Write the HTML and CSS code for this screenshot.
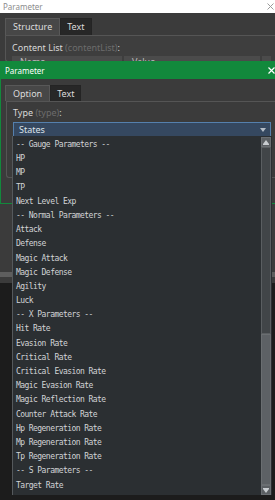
FILE: index.html
```html
<!DOCTYPE html>
<html lang="en">
<head>
  <meta charset="UTF-8">
  <meta name="viewport" content="width=device-width, initial-scale=1.0">
  <title>Parameter</title>
  <link rel="stylesheet" href="styles.css">
</head>
<body>

  <div class="desktop">

    <!-- window behind -->
    <div class="win win-back">
      <div class="titlebar light">
        <span>Parameter</span>
        <svg class="close" width="7" height="7" viewBox="0 0 7 7"><path d="M0.5 0.5L6.5 6.5M6.5 0.5L0.5 6.5" stroke="#9a9a9a" stroke-width="1"/></svg>
      </div>
      <div class="tabs">
        <div class="tab active">Structure</div>
        <div class="tab">Text</div>
      </div>
      <div class="pane back-pane">
        <div class="field-label">Content List <span class="dim">(contentList)</span>:</div>
        <div class="table-head">
          <div class="th th-name">Name</div>
          <div class="th th-value">Value</div>
          <div class="th th-sort">&#9650;</div>
        </div>
      </div>
      <div class="back-footer"></div>
    </div>

    <!-- window in front -->
    <div class="win win-front">
      <div class="titlebar green">
        <span>Parameter</span>
        <svg class="close" width="7" height="7" viewBox="0 0 7 7"><path d="M0.5 0.5L6.5 6.5M6.5 0.5L0.5 6.5" stroke="#fff" stroke-width="1.2"/></svg>
      </div>
      <div class="tabs">
        <div class="tab active">Option</div>
        <div class="tab">Text</div>
      </div>
      <div class="pane front-pane">
        <div class="field-label">Type <span class="dim">(type)</span>:</div>
        <div class="select">
          <span>States</span>
          <svg class="select-arrow" width="6" height="4" viewBox="0 0 6 4"><path d="M0 0h6L3 4z" fill="#b4bcc6"/></svg>
        </div>
      </div>
    </div>

    <!-- open dropdown list -->
    <div class="dropdown">
      <ul class="options">
        <li>-- Gauge Parameters --</li>
        <li>HP</li>
        <li>MP</li>
        <li>TP</li>
        <li>Next Level Exp</li>
        <li>-- Normal Parameters --</li>
        <li>Attack</li>
        <li>Defense</li>
        <li>Magic Attack</li>
        <li>Magic Defense</li>
        <li>Agility</li>
        <li>Luck</li>
        <li>-- X Parameters --</li>
        <li>Hit Rate</li>
        <li>Evasion Rate</li>
        <li>Critical Rate</li>
        <li>Critical Evasion Rate</li>
        <li>Magic Evasion Rate</li>
        <li>Magic Reflection Rate</li>
        <li>Counter Attack Rate</li>
        <li>Hp Regeneration Rate</li>
        <li>Mp Regeneration Rate</li>
        <li>Tp Regeneration Rate</li>
        <li>-- S Parameters --</li>
        <li>Target Rate</li>
      </ul>
      <div class="scrollbar">
        <div class="scroll-btn">
          <svg width="6" height="5" viewBox="0 0 6 5"><path d="M3 0L6 4H0z" fill="#c8ccd0"/><rect x="0" y="4" width="6" height="1" fill="#c8ccd0"/></svg>
        </div>
        <div class="scroll-track"></div>
        <div class="scroll-thumb"></div>
        <div class="scroll-btn">
          <svg width="6" height="5" viewBox="0 0 6 5"><rect x="0" y="0" width="6" height="1" fill="#c8ccd0"/><path d="M0 1h6L3 5z" fill="#c8ccd0"/></svg>
        </div>
      </div>
    </div>

  </div>

</body>
</html>
```

FILE: styles.css
```css
* {
  box-sizing: border-box;
}

body {
  margin: 0;
  background-color: #1c1c1c;
  font-family: "Noto Sans", sans-serif;
  font-size: 9px;
  color: #d8d8d8;
}

.desktop {
  position: relative;
  width: 275px;
  height: 500px;
  overflow: hidden;
}

/* windows */
.win {
  position: absolute;
  left: 0;
  width: 275px;
  display: flex;
  flex-direction: column;
  background-color: #3b3b3b;
}

.win-back {
  top: 0;
  height: 283px;
}

.win-front {
  top: 61px;
  height: 143px;
  border-left: 1px solid #12893c;
  border-bottom: 1px solid #12893c;
}

.titlebar {
  display: flex;
  align-items: center;
  justify-content: space-between;
  font-size: 8px;
}

.titlebar.light {
  height: 13px;
  padding: 0 1px 0 3px;
  background-color: #fff;
  color: #8c8c8c;
}

.titlebar.green {
  height: 18px;
  margin-left: -1px;
  padding: 0 0 0 5px;
  background-color: #12893c;
  color: #fff;
}

/* tabs */
.tabs {
  display: flex;
  padding: 5px 0 0 5px;
}

.win-front .tabs {
  padding: 6px 0 0 4px;
}

.tab {
  height: 17px;
  line-height: 16px;
  padding: 0 6px;
  background-color: #272727;
  border: 1px solid #242424;
  border-bottom: none;
  color: #dcdcdc;
}

.win-front .tab {
  height: 16px;
  line-height: 15px;
}

.tab.active {
  padding: 0 7px;
  background-color: #474747;
  border-color: #585858;
}

/* tab pane */
.pane {
  border-top: 1px solid #555;
  border-left: 1px solid #555;
  border-bottom: 1px solid #555;
  border-bottom-left-radius: 3px;
}

.back-pane {
  margin-left: 5px;
  padding: 5px 0 0 6px;
  background-color: #3e3e3e;
}

.front-pane {
  margin-left: 5px;
  height: 77px;
  padding: 4px 0 0 6px;
}

.field-label {
  height: 13px;
  line-height: 13px;
}

.dim {
  color: #6c6c6c;
}

/* only the top of the header row peeks out above the front window */
.back-pane .table-head {
  display: flex;
  margin-top: 2px;
  height: 5px;
  gap: 2px;
  overflow: hidden;
}

.th {
  height: 5px;
  overflow: hidden;
  background-color: #4b4b4b;
  padding-left: 8px;
  line-height: 12px;
  color: #bdbdbd;
}

.th-name {
  width: 110px;
}

.th-value {
  width: 136px;
}

.th-sort {
  width: 9px;
  padding: 0;
  font-size: 5px;
  text-align: center;
}

.back-footer {
  margin-top: auto;
  margin-bottom: 6px;
  height: 5px;
  background-color: #5e5e5e;
}

/* select box */
.select {
  display: flex;
  align-items: center;
  justify-content: space-between;
  width: 258px;
  height: 15px;
  margin-top: 3px;
  padding: 0 4px 0 5px;
  background-color: #354860;
  border: 1px solid #5580ad;
  color: #dde3ea;
}

/* dropdown list */
.dropdown {
  position: absolute;
  top: 136px;
  left: 12px;
  width: 260px;
  height: 359px;
  display: flex;
  background-color: #2b2f32;
  border-left: 1px solid #55595c;
  border-right: 1px solid #2b2f32;
}

.options {
  flex: 1;
  list-style-type: none;
  margin: 0;
  padding: 2px 0 0 3px;
  font-family: "DejaVu Sans Mono", monospace;
  font-size: 8px;
  letter-spacing: -0.55px;
  color: #d2d4d6;
}

.options li {
  height: 14.2px;
  line-height: 14.2px;
  white-space: nowrap;
}

.scrollbar {
  width: 10px;
  padding-top: 1px;
  display: flex;
  flex-direction: column;
}

.scroll-btn {
  height: 10px;
  display: flex;
  align-items: center;
  justify-content: center;
  background-color: #5b5f63;
  border: 1px solid #6b6f73;
}

.scroll-track {
  height: 187px;
  background-color: #414548;
  border: 1px solid #5a5e61;
}

.scroll-thumb {
  height: 151px;
  background-color: #5d6165;
  border: 1px solid #6a6e71;
}
```
